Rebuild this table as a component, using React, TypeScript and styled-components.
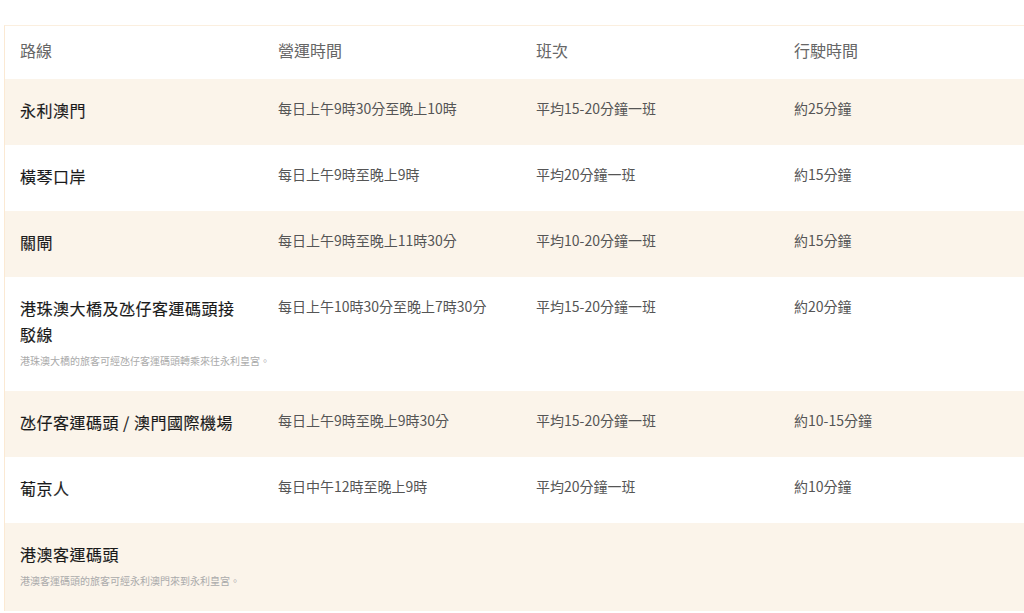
import React from 'react';
import styled, { createGlobalStyle } from 'styled-components';

interface Route {
  name: string;
  hours?: string;
  frequency?: string;
  duration?: string;
  note?: string;
}

const routes: Route[] = [
  { name: '永利澳門', hours: '每日上午9時30分至晚上10時', frequency: '平均15-20分鐘一班', duration: '約25分鐘' },
  { name: '橫琴口岸', hours: '每日上午9時至晚上9時', frequency: '平均20分鐘一班', duration: '約15分鐘' },
  { name: '關閘', hours: '每日上午9時至晚上11時30分', frequency: '平均10-20分鐘一班', duration: '約15分鐘' },
  {
    name: '港珠澳大橋及氹仔客運碼頭接駁線',
    hours: '每日上午10時30分至晚上7時30分',
    frequency: '平均15-20分鐘一班',
    duration: '約20分鐘',
    note: '港珠澳大橋的旅客可經氹仔客運碼頭轉乘來往永利皇宮。'
  },
  { name: '氹仔客運碼頭 / 澳門國際機場', hours: '每日上午9時至晚上9時30分', frequency: '平均15-20分鐘一班', duration: '約10-15分鐘' },
  { name: '葡京人', hours: '每日中午12時至晚上9時', frequency: '平均20分鐘一班', duration: '約10分鐘' },
  { name: '港澳客運碼頭', note: '港澳客運碼頭的旅客可經永利澳門來到永利皇宮。' }
];

const GlobalStyle = createGlobalStyle`
  html, body {
    margin: 0;
    padding: 0;
    overflow: hidden;
    background: #fff;
  }
  body {
    font-family: "Noto Sans CJK TC", "Noto Sans", sans-serif;
  }
`;

const Page = styled.div`
  padding: 25px 0 0 4px;
`;

const Table = styled.div`
  width: 1040px;
  border-top: 1px solid #fbefdf;
  border-left: 1px solid #fbe9d3;
  box-sizing: border-box;
`;

const Row = styled.div<{ $shaded?: boolean }>`
  display: grid;
  grid-template-columns: 258px 258px 258px 1fr;
  background: ${(p) => (p.$shaded ? '#fbf4ea' : '#ffffff')};
`;

const HeadCell = styled.div`
  padding: 11px 24px 16px 15px;
  font-size: 16px;
  line-height: 26px;
  color: #666;
`;

const Cell = styled.div`
  padding: 18px 24px 20px 15px;
  font-size: 14px;
  line-height: 22px;
  color: #555;
`;

const NameCell = styled(Cell)`
  padding-top: 18px;
  padding-bottom: 22px;
`;

const Name = styled.div`
  font-size: 16px;
  line-height: 26px;
  font-weight: 400;
  color: #1a1a1a;
  letter-spacing: 0.5px;
  -webkit-text-stroke: 0.15px #1a1a1a;
`;

const Note = styled.div`
  margin-top: 6px;
  font-size: 10px;
  line-height: 16px;
  color: #aaa;
  white-space: nowrap;
`;

export default function App() {
  return (
    <Page>
      <GlobalStyle />
      <Table>
        <Row>
          <HeadCell>路線</HeadCell>
          <HeadCell>營運時間</HeadCell>
          <HeadCell>班次</HeadCell>
          <HeadCell>行駛時間</HeadCell>
        </Row>
        {routes.map((r, i) => (
          <Row key={r.name} $shaded={i % 2 === 0}>
            <NameCell>
              <Name>{r.name}</Name>
              {r.note && <Note>{r.note}</Note>}
            </NameCell>
            <Cell>{r.hours}</Cell>
            <Cell>{r.frequency}</Cell>
            <Cell>{r.duration}</Cell>
          </Row>
        ))}
      </Table>
    </Page>
  );
}
